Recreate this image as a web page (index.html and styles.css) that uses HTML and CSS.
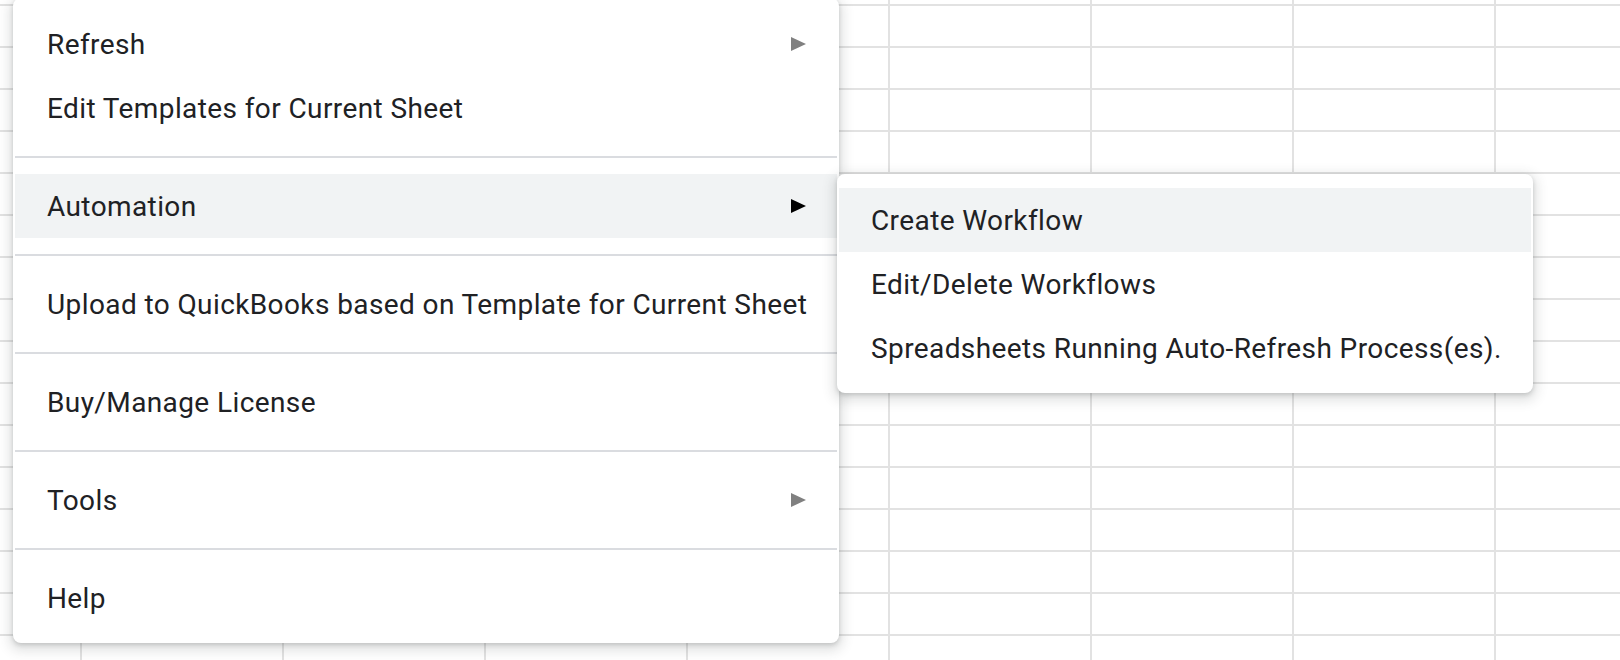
FILE: index.html
```html
<!DOCTYPE html>
<html>
<head>
<meta charset="utf-8">
<link rel="stylesheet" href="styles.css">
</head>
<body>
<div class="sheet">
  <div class="menu main-menu">
    <div class="item"><span class="label">Refresh</span><svg class="arrow dim" width="15" height="14" viewBox="0 0 15 14"><polygon points="0,0 15,7 0,14"/></svg></div>
    <div class="item"><span class="label">Edit Templates for Current Sheet</span></div>
    <div class="sep"></div>
    <div class="item hover"><span class="label">Automation</span><svg class="arrow" width="15" height="14" viewBox="0 0 15 14"><polygon points="0,0 15,7 0,14"/></svg></div>
    <div class="sep"></div>
    <div class="item"><span class="label">Upload to QuickBooks based on Template for Current Sheet</span></div>
    <div class="sep"></div>
    <div class="item"><span class="label">Buy/Manage License</span></div>
    <div class="sep"></div>
    <div class="item"><span class="label">Tools</span><svg class="arrow dim" width="15" height="14" viewBox="0 0 15 14"><polygon points="0,0 15,7 0,14"/></svg></div>
    <div class="sep"></div>
    <div class="item"><span class="label">Help</span></div>
  </div>
  <div class="menu sub-menu">
    <div class="item hover"><span class="label">Create Workflow</span></div>
    <div class="item"><span class="label">Edit/Delete Workflows</span></div>
    <div class="item"><span class="label">Spreadsheets Running Auto-Refresh Process(es).</span></div>
  </div>
</div>
</body>
</html>
```
FILE: styles.css
```css
html, body {
  margin: 0;
  padding: 0;
  background: #ffffff;
}
.sheet {
  position: relative;
  width: 1620px;
  height: 660px;
  overflow: hidden;
  background-color: #ffffff;
  background-image:
    repeating-linear-gradient(to bottom, transparent 0, transparent 4px, #e2e2e2 4px, #e2e2e2 6px, transparent 6px, transparent 42px),
    repeating-linear-gradient(to right, transparent 0, transparent 80px, #e2e2e2 80px, #e2e2e2 82px, transparent 82px, transparent 202px);
  font-family: Roboto, "Liberation Sans", Arial, sans-serif;
}
.menu {
  position: absolute;
  background: #ffffff;
  border-radius: 8px;
  box-shadow: 0 4px 12px 4px rgba(60, 64, 67, 0.15), 0 2px 4px rgba(60, 64, 67, 0.2);
  padding: 14px 2px 13px 2px;
  box-sizing: border-box;
}
.main-menu {
  left: 13px;
  top: -2px;
  width: 826px;
}
.sub-menu {
  left: 837px;
  top: 174px;
  width: 696px;
}
.item {
  height: 64px;
  display: flex;
  align-items: center;
  justify-content: space-between;
  padding: 0 31px 0 32px;
  font-size: 28px;
  letter-spacing: 0.4px;
  color: #202124;
  white-space: nowrap;
}
.item.hover {
  background: #f1f3f4;
}
.arrow {
  display: block;
  fill: #000000;
}
.arrow.dim {
  fill: #808080;
}
.sep {
  height: 34px;
  display: flex;
  align-items: center;
}
.sep::before {
  content: "";
  display: block;
  width: 100%;
  height: 2px;
  background: #dadce0;
}
```
